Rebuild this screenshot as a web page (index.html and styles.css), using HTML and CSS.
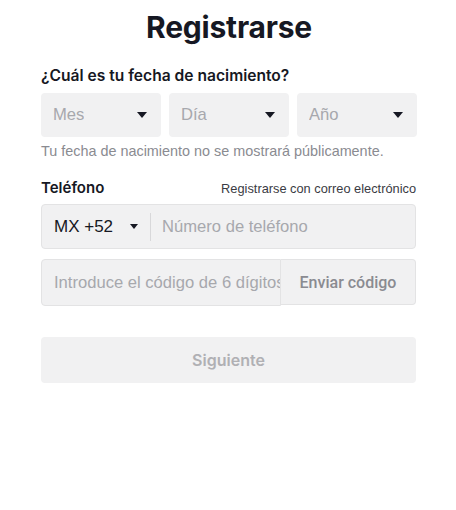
FILE: index.html
```html
<!DOCTYPE html>
<html lang="es">
<head>
<meta charset="utf-8">
<link rel="stylesheet" href="styles.css">
</head>
<body>
<div class="page">
  <h1 class="title">Registrarse</h1>
  <div class="label">¿Cuál es tu fecha de nacimiento?</div>
  <div class="dob">
    <div class="select"><span class="ph">Mes</span><span class="caret"></span></div>
    <div class="select"><span class="ph">Día</span><span class="caret"></span></div>
    <div class="select"><span class="ph">Año</span><span class="caret"></span></div>
  </div>
  <div class="hint">Tu fecha de nacimiento no se mostrará públicamente.</div>
  <div class="row-head">
    <span class="label2">Teléfono</span>
    <span class="link">Registrarse con correo electrónico</span>
  </div>
  <div class="phone">
    <div class="cc"><span>MX +52</span><span class="caret small"></span></div>
    <div class="divider"></div>
    <span class="ph">Número de teléfono</span>
  </div>
  <div class="code">
    <div class="code-input"><span class="ph clip">Introduce el código de 6 dígitos</span></div>
    <div class="send">Enviar código</div>
  </div>
  <div class="next">Siguiente</div>
</div>
</body>
</html>
```
FILE: styles.css
```css
* { box-sizing: border-box; }
html, body { margin: 0; background: #fff; }
body {
  font-family: "Liberation Sans", Arial, sans-serif;
  color: #161823;
}
.page {
  width: 376px;
  margin: 0 0 0 41px;
  display: flex;
  flex-direction: column;
}
.title {
  margin: 8px 0 0;
  font-family: Inter, sans-serif;
  font-weight: 700;
  font-size: 30px;
  line-height: 38px;
  text-align: center;
  letter-spacing: -0.2px;
}
.label {
  margin-top: 20px;
  font-family: Inter, sans-serif;
  font-weight: 600;
  font-size: 15.6px;
  line-height: 20px;
}
.dob {
  margin-top: 7px;
  display: grid;
  grid-template-columns: repeat(3, 1fr);
  gap: 8px;
}
.select {
  height: 44px;
  background: #f1f1f2;
  border-radius: 4px;
  display: flex;
  align-items: center;
  justify-content: space-between;
  padding: 0 14px 0 12px;
}
.ph {
  color: #a7a8ad;
  font-size: 16.6px;
  white-space: nowrap;
  overflow: hidden;
}
.caret {
  width: 0;
  height: 0;
  border-left: 5px solid transparent;
  border-right: 5px solid transparent;
  border-top: 6px solid #161823;
}
.caret.small {
  border-left-width: 4px;
  border-right-width: 4px;
  border-top-width: 5px;
}
.hint {
  margin-top: 5px;
  font-size: 14.4px;
  line-height: 18px;
  color: #8a8b91;
}
.row-head {
  margin-top: 18px;
  display: flex;
  justify-content: space-between;
  align-items: baseline;
}
.label2 {
  font-family: Inter, sans-serif;
  font-weight: 600;
  font-size: 15px;
  line-height: 20px;
}
.link {
  font-size: 12.8px;
  color: #3a3b43;
  margin-right: 1px;
}
.phone {
  margin-top: 6px;
  width: 375px;
  height: 45px;
  background: #f1f1f2;
  border: 1px solid #e3e3e4;
  border-radius: 4px;
  display: flex;
  align-items: center;
}
.cc {
  display: flex;
  align-items: center;
  gap: 17px;
  padding: 0 12px 0 12px;
  font-size: 17px;
  color: #161823;
}
.divider {
  width: 1px;
  height: 28px;
  background: #d8d8da;
  margin-right: 11px;
}
.code {
  margin-top: 10px;
  width: 375px;
  display: flex;
  align-items: flex-start;
}
.code-input {
  width: 240px;
  height: 47px;
  background: #f1f1f2;
  border: 1px solid #e3e3e4;
  border-radius: 4px 0 0 4px;
  display: flex;
  align-items: center;
  padding: 0 0 0 12px;
  overflow: hidden;
}
.clip { flex: 1; }
.send {
  flex: 1;
  height: 46px;
  background: #f1f1f2;
  border: 1px solid #e3e3e4;
  border-left: none;
  border-radius: 0 4px 4px 0;
  display: flex;
  align-items: center;
  justify-content: center;
  font-family: Roboto, sans-serif;
  font-weight: 500;
  font-size: 16px;
  color: #8a8b91;
}
.next {
  margin-top: 31px;
  width: 375px;
  height: 46px;
  background: #f1f1f2;
  border-radius: 4px;
  display: flex;
  align-items: center;
  justify-content: center;
  font-family: Inter, sans-serif;
  font-weight: 600;
  font-size: 16px;
  color: #b0b0b4;
}
```
